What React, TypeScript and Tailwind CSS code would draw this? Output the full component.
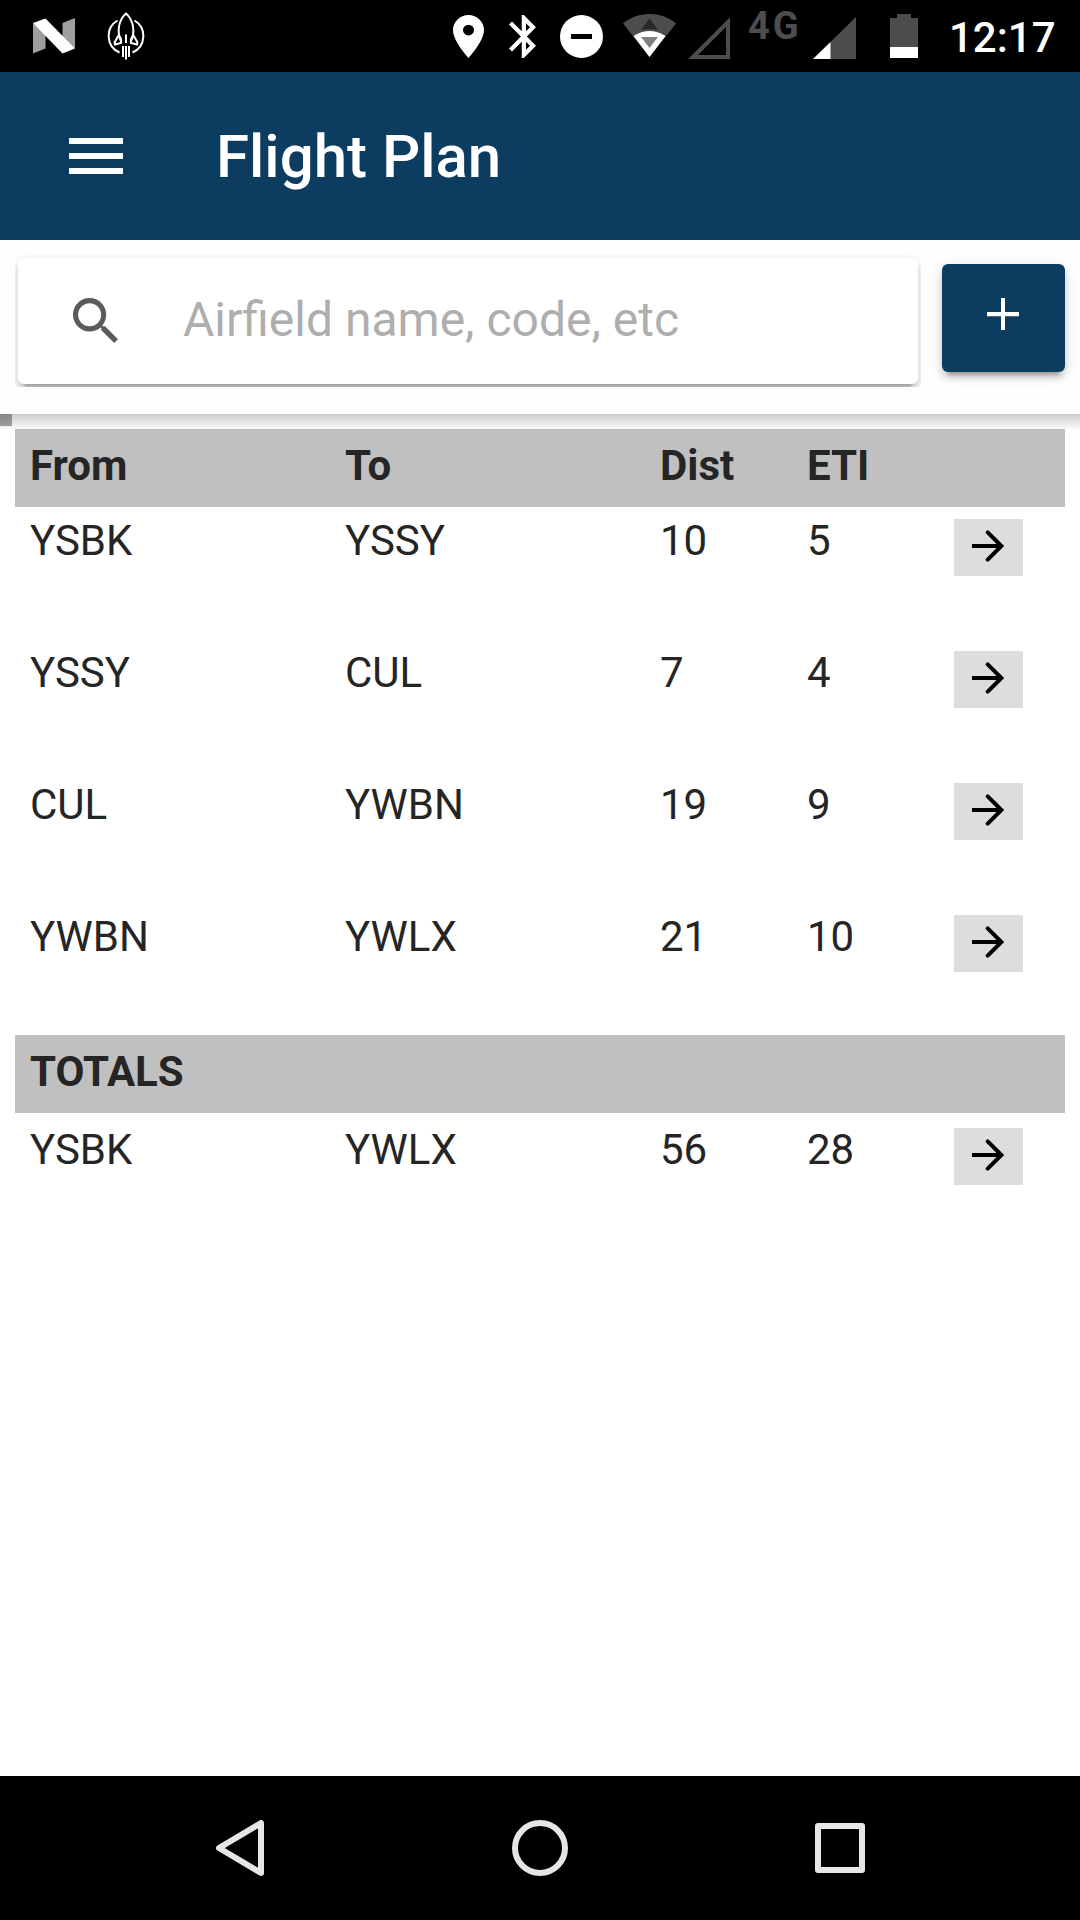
import type { ReactNode } from "react";

interface Leg {
  from: string;
  to: string;
  dist: number;
  eti: number;
}

const legs: Leg[] = [
  { from: "YSBK", to: "YSSY", dist: 10, eti: 5 },
  { from: "YSSY", to: "CUL", dist: 7, eti: 4 },
  { from: "CUL", to: "YWBN", dist: 19, eti: 9 },
  { from: "YWBN", to: "YWLX", dist: 21, eti: 10 },
];

const total: Leg = { from: "YSBK", to: "YWLX", dist: 56, eti: 28 };

const columns = "grid grid-cols-[315px_315px_147px_147px_126px]";

function StatusBar() {
  return (
    <div className="flex h-[72px] shrink-0 items-start bg-black text-white">
      {/* Notifications */}
      <svg className="ml-[33px] mt-[18px] h-[36px] w-[42px]" viewBox="0 0 42 36">
        <path d="M0 5v30.5l12.5-5V14zM42 0v30.5L29.5 22V5z" fill="#9e9e9e" />
        <path d="M0 5 12.5.5 42 30.5 29.5 35.5z" fill="#fff" />
      </svg>
      <svg
        className="ml-[32px] mt-[12px] h-[48px] w-[38px]"
        viewBox="0 0 38 48"
        fill="none"
        stroke="#fff"
        strokeWidth="2"
      >
        <path d="M10.500 8.500A18 18 0 0 0 12.500 40.500M27.500 8.500A18 18 0 0 1 25.500 40.500" />
        <path d="M13.500 28.500C10 19 11.500 8 19 1.500 26.500 8 28 19 24.500 28.500M19 22.500v8.500" />
        <path d="M11.500 23.500 7.500 30.500l.5 2 6-1.500c.5-3-.5-6-2.500-7.500zM26.500 23.500l4 7-.5 2-6-1.500c-.5-3 .5-6 2.500-7.500z" />
        <path d="M16 34v11M19 34v13.500M22 34v11" />
      </svg>

      {/* System icons */}
      <svg className="ml-[308px] mt-[15px] h-[43px] w-[31px]" viewBox="5 2 14 20" preserveAspectRatio="none">
        <path
          d="M12 2C8.130 2 5 5.130 5 9c0 5.250 7 13 7 13s7-7.750 7-13c0-3.870-3.130-7-7-7zm0 9.500a2.500 2.500 0 0 1 0-5 2.500 2.500 0 0 1 0 5z"
          fill="#fff"
        />
      </svg>
      <svg className="ml-[25px] mt-[15px] h-[43px] w-[27px]" viewBox="5 2 12.710 20" preserveAspectRatio="none">
        <path
          d="M17.710 7.710 12 2h-1v7.590L6.410 5 5 6.410 10.590 12 5 17.590 6.410 19 11 14.410V22h1l5.710-5.710-4.300-4.290 4.300-4.290zM13 5.830l1.880 1.880L13 9.590V5.830zm1.880 10.460L13 18.170v-3.760l1.880 1.880z"
          fill="#fff"
        />
      </svg>
      <svg className="ml-[24px] mt-[15px] size-[43px]" viewBox="0 0 43 43">
        <circle cx="21.500" cy="21.500" r="21.500" fill="#fff" />
        <path d="M11 19h21v5H11z" fill="#000" />
      </svg>
      <svg className="ml-[20px] mt-[14px] h-[43px] w-[53px]" viewBox="0 0 53 43">
        <path d="M0 9.500C15-3.200 38-3.200 53 9.500L26.500 43z" fill="#4d4d4d" />
        <path d="M26.500 4.500 35 16q-8.500-2-17 0z" fill="#262626" />
        <path d="M10.500 22Q26.500 12 42.500 22L26.500 43z" fill="#fff" />
        <path d="M18 23h17l-8.500 11z" fill="#808080" />
      </svg>
      <svg className="ml-[12px] mt-[17px] size-[42px]" viewBox="0 0 42 42">
        <path d="M5 40 40 5v35z" fill="none" stroke="#4d4d4d" strokeWidth="4" />
      </svg>
      <span className="ml-[18px] mt-[6px] w-[52px] text-[38px] leading-[40px] font-bold tracking-[3px] text-[#4d4d4d]">
        4G
      </span>
      <svg className="ml-[13px] mt-[17px] h-[42px] w-[43px]" viewBox="0 0 43 42">
        <path d="M0 42 43 0v42z" fill="#4d4d4d" />
        <path d="M0 42 17.500 25v17z" fill="#fff" />
      </svg>
      <svg className="ml-[34px] mt-[14px] h-[44px] w-[28px]" viewBox="0 0 28 44">
        <path d="M7 0h14v4h7v29H0V4h7z" fill="#4d4d4d" />
        <path d="M0 33h28v11H0z" fill="#fff" />
      </svg>
      <span className="ml-[31px] mt-[13px] text-[42px] leading-[50px] font-medium">12:17</span>
    </div>
  );
}

function Toolbar() {
  return (
    <header className="flex h-[168px] shrink-0 items-center bg-[#0c3c60] pl-[69px] text-white">
      <button className="flex w-[54px] flex-col gap-[9px]" aria-label="Menu">
        <span className="h-[6px] bg-white" />
        <span className="h-[6px] bg-white" />
        <span className="h-[6px] bg-white" />
      </button>
      <h1 className="mt-[2px] ml-[93px] text-[60px] leading-[72px] font-medium">Flight Plan</h1>
    </header>
  );
}

function SearchRow() {
  return (
    <div className="flex h-[174px] shrink-0 items-start bg-[#fefefe] pt-[15px] pl-[15px]">
      {/* the card's shadow is cut off 3px outside its edge */}
      <div className="h-[132px] w-[906px] overflow-hidden p-[3px]">
        <div className="flex h-[126px] items-center rounded-[6px] bg-white pl-[55px] shadow-[0_6px_6px_rgba(0,0,0,0.14),0_9px_3px_-6px_rgba(0,0,0,0.2),0_3px_15px_rgba(0,0,0,0.12)]">
          <svg className="mb-px size-[45px]" viewBox="64 64 384 384">
            <path
              d="M337.509 305.372h-17.501l-6.571-5.486c20.791-25.232 33.922-57.054 33.922-93.257C347.358 127.632 283.896 64 205.135 64 127.452 64 64 127.632 64 206.629s63.452 142.628 142.225 142.628c35.011 0 67.831-13.167 92.991-34.008l6.561 5.487v17.551L415.180 448 448 415.086 337.509 305.372zm-131.284 0c-54.702 0-98.463-43.887-98.463-98.743 0-54.858 43.761-98.742 98.463-98.742 54.700 0 98.462 43.884 98.462 98.742 0 54.856-43.762 98.743-98.462 98.743z"
              fill="#5b5b5b"
            />
          </svg>
          <span className="mb-[2px] ml-[65px] text-[48px] leading-[60px] text-[#aeaeae]">
            Airfield name, code, etc
          </span>
        </div>
      </div>
      <button
        className="mt-[9px] ml-[21px] flex h-[108px] w-[123px] items-start rounded-[6px] bg-[#0c3c60] pt-[34px] pl-[45px] shadow-[0_6px_6px_rgba(0,0,0,0.14),0_9px_3px_-6px_rgba(0,0,0,0.2),0_3px_15px_rgba(0,0,0,0.12)]"
        aria-label="Add"
      >
        <svg className="size-[32px]" viewBox="0 0 32 32">
          <path d="M14 0h4v14h14v4.300H18V32h-4V18.300H0V14h14z" fill="#fff" />
        </svg>
      </button>
    </div>
  );
}

function HeaderRow({ children }: { children: ReactNode }) {
  return (
    <div className={`${columns} h-[78px] bg-[#c0c0c0] pt-[7px] font-bold leading-[60px]`}>{children}</div>
  );
}

function LegRow({ leg }: { leg: Leg }) {
  return (
    <div className={`${columns} h-[132px] pt-[4px] leading-[60px]`}>
      <span className="pl-[15px]">{leg.from}</span>
      <span className="pl-[15px]">{leg.to}</span>
      <span className="pl-[15px]">{leg.dist}</span>
      <span className="pl-[15px]">{leg.eti}</span>
      <button
        className="mt-[8px] ml-[15px] flex h-[57px] w-[69px] items-start bg-[#dddddd] pt-[11px] pl-[18px]"
        aria-label={`${leg.from} to ${leg.to}`}
      >
        <svg className="size-[32px]" viewBox="0 0 32 32" fill="none" stroke="#000" strokeWidth="4">
          <path d="M0 16h29" />
          <path d="M15.700 2.300 29.400 16 15.700 29.700" strokeLinecap="round" />
        </svg>
      </button>
    </div>
  );
}

export default function App() {
  return (
    <div className="flex h-[1920px] w-[1080px] flex-col overflow-hidden bg-white font-[Roboto,sans-serif] text-[#252525]">
      <StatusBar />
      <Toolbar />
      <SearchRow />

      <main className="flex-1 text-[42px]">
        {/* shadow under the search row */}
        <div className="h-[15px] bg-linear-to-b from-[#cccccc] to-[#fafafa]">
          <div className="h-[12px] w-[12px] bg-linear-to-b from-[#878787] to-[#9c9c9c]" />
        </div>
        <div className="mx-[15px]">
          <HeaderRow>
            <span className="pl-[15px]">From</span>
            <span className="pl-[15px]">To</span>
            <span className="pl-[15px]">Dist</span>
            <span className="pl-[15px]">ETI</span>
          </HeaderRow>
          {legs.map((leg) => (
            <LegRow key={leg.from} leg={leg} />
          ))}
          <HeaderRow>
            <span className="pl-[15px]">TOTALS</span>
          </HeaderRow>
          <div className="pt-[3px]">
            <LegRow leg={total} />
          </div>
        </div>
      </main>

      {/* Android navigation */}
      <nav className="flex h-[144px] shrink-0 items-center bg-black pl-[215px]">
        <svg
          className="h-[56px] w-[49px]"
          viewBox="0 0 49 56"
          fill="none"
          stroke="#e6e6e6"
          strokeWidth="6"
          strokeLinejoin="round"
        >
          <path d="M46 3v50L4 28z" />
        </svg>
        <svg className="ml-[248px] size-[56px]" viewBox="0 0 56 56" fill="none" stroke="#e6e6e6" strokeWidth="6">
          <circle cx="28" cy="28" r="25" />
        </svg>
        <svg
          className="ml-[247px] size-[50px]"
          viewBox="0 0 50 50"
          fill="none"
          stroke="#e6e6e6"
          strokeWidth="6"
          strokeLinejoin="round"
        >
          <path d="M3 3h44v44H3z" />
        </svg>
      </nav>
    </div>
  );
}
